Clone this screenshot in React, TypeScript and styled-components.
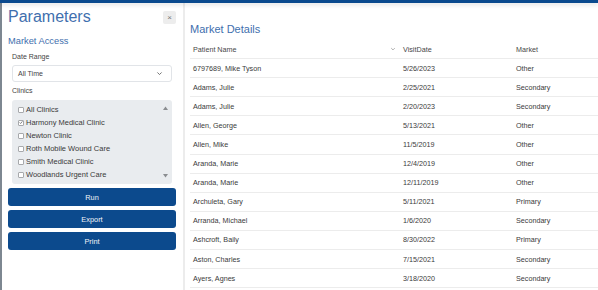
import React from 'react';
import styled, { createGlobalStyle } from 'styled-components';

const GlobalStyle = createGlobalStyle`
  html, body {
    margin: 0;
    padding: 0;
    background: #ffffff;
    font-family: "Liberation Sans", Arial, sans-serif;
  }
  * { box-sizing: border-box; }
`;

const clinics = [
  { name: 'All Clinics', checked: false },
  { name: 'Harmony Medical Clinic', checked: true },
  { name: 'Newton Clinic', checked: false },
  { name: 'Roth Mobile Wound Care', checked: false },
  { name: 'Smith Medical Clinic', checked: false },
  { name: 'Woodlands Urgent Care', checked: false },
];

const rows = [
  ['6797689, Mike Tyson', '5/26/2023', 'Other'],
  ['Adams, Julie', '2/25/2021', 'Secondary'],
  ['Adams, Julie', '2/20/2023', 'Secondary'],
  ['Allen, George', '5/13/2021', 'Other'],
  ['Allen, Mike', '11/5/2019', 'Other'],
  ['Aranda, Marie', '12/4/2019', 'Other'],
  ['Aranda, Marie', '12/11/2019', 'Other'],
  ['Archuleta, Gary', '5/11/2021', 'Primary'],
  ['Arranda, Michael', '1/6/2020', 'Secondary'],
  ['Ashcroft, Baily', '8/30/2022', 'Primary'],
  ['Aston, Charles', '7/15/2021', 'Secondary'],
  ['Ayers, Agnes', '3/18/2020', 'Secondary'],
];

const Page = styled.div`
  width: 598px;
  height: 290px;
  overflow: hidden;
  display: flex;
  flex-direction: column;
`;

const TopBar = styled.div`
  height: 3px;
  background: #0b4a8e;
  box-shadow: 0 2px 4px rgba(0, 0, 0, 0.13);
  position: relative;
  z-index: 2;
`;

const Body = styled.div`
  flex: 1;
  display: flex;
`;

const Rail = styled.div`
  width: 2px;
  background: #7d8791;
`;

const Sidebar = styled.aside`
  width: 183px;
  padding: 0 7px 0 6px;
  border-right: 2px solid #ececec;
`;

const SideHeader = styled.div`
  display: flex;
  justify-content: space-between;
  align-items: flex-start;
  padding-top: 4px;
`;

const Title = styled.h1`
  margin: 0;
  font-size: 16px;
  font-weight: 400;
  line-height: 20px;
  color: #3f6fae;
`;

const CloseButton = styled.button`
  margin-top: 4px;
  width: 13px;
  height: 13px;
  padding: 0;
  border: none;
  border-radius: 2px;
  background: #ededed;
  color: #777;
  font-size: 8px;
  line-height: 13px;
  font-family: inherit;
`;

const SectionTitle = styled.h2`
  margin: 8px 0 0;
  font-size: 9.3px;
  font-weight: 400;
  line-height: 12px;
  color: #3f6fae;
`;

const Group = styled.div`
  padding: 0 4px;
`;

const Label = styled.div<{ $top: number }>`
  margin-top: ${p => p.$top}px;
  font-size: 7px;
  line-height: 9px;
  color: #444;
`;

const Select = styled.div`
  margin-top: 4px;
  height: 17px;
  border: 1px solid #e1e4e8;
  border-radius: 3px;
  background: #fff;
  display: flex;
  align-items: center;
  justify-content: space-between;
  padding: 0 8px 0 5px;
  font-size: 7px;
  color: #444;
`;

const ListBox = styled.div`
  margin-top: 5px;
  height: 84px;
  border-radius: 3px;
  background: #e9ecef;
  display: flex;
  padding: 2px 3px 3px 6px;
`;

const Items = styled.div`
  flex: 1;
  display: flex;
  flex-direction: column;
  padding-top: 1px;
`;

const Item = styled.div`
  height: 13px;
  display: flex;
  align-items: center;
  gap: 2px;
  font-size: 7.5px;
  color: #3a3a3a;
`;

const Box = styled.span<{ $checked: boolean }>`
  width: 6px;
  height: 6px;
  border: 1px solid #a7a9ac;
  border-radius: 1px;
  background: #fff;
  display: flex;
  align-items: center;
  justify-content: center;
`;

const ScrollTrack = styled.div`
  width: 8px;
  display: flex;
  flex-direction: column;
  justify-content: space-between;
  align-items: center;
  padding: 4px 0 3px;
`;

const Buttons = styled.div`
  margin-top: 4px;
  display: flex;
  flex-direction: column;
  gap: 4px;
`;

const ActionButton = styled.button`
  height: 18px;
  border: none;
  border-radius: 3px;
  background: #0c4a8d;
  color: #f1f4f8;
  font-family: inherit;
  font-size: 7.4px;
  padding: 0;
`;

const Main = styled.main`
  flex: 1;
  padding: 0 0 0 5px;
  min-width: 0;
`;

const MainTitle = styled.h2`
  margin: 19px 0 0;
  font-size: 11px;
  font-weight: 400;
  line-height: 14px;
  color: #3f6fae;
`;

const Table = styled.div`
  margin-top: 4px;
`;

const Row = styled.div<{ $header?: boolean }>`
  display: grid;
  grid-template-columns: 210px 113px 1fr;
  height: 19.1px;
  align-items: center;
  border-bottom: 1px solid #ececec;
  font-size: 7.2px;
  color: ${p => (p.$header ? '#474747' : '#3a3a3a')};
`;

const Cell = styled.div`
  padding-left: 3px;
  white-space: nowrap;
`;

const HeadCell = styled(Cell)`
  display: flex;
  justify-content: space-between;
  align-items: center;
  padding-right: 4px;
`;

const Chevron = ({ size = 6, color = '#777' }: { size?: number; color?: string }) => (
  <svg width={size} height={size} viewBox="0 0 10 10">
    <path d="M2 3.5 L5 6.5 L8 3.5" fill="none" stroke={color} strokeWidth="1.3" />
  </svg>
);

const Arrow = ({ up }: { up?: boolean }) => (
  <svg width="5" height="4" viewBox="0 0 10 8">
    <path d={up ? 'M0 8 L5 1 L10 8 Z' : 'M0 0 L5 7 L10 0 Z'} fill="#8a8d90" />
  </svg>
);

const App = () => {
  return (
    <>
      <GlobalStyle />
      <Page>
        <TopBar />
        <Body>
          <Rail />
          <Sidebar>
            <SideHeader>
              <Title>Parameters</Title>
              <CloseButton>×</CloseButton>
            </SideHeader>
            <SectionTitle>Market Access</SectionTitle>
            <Group>
              <Label $top={5}>Date Range</Label>
              <Select>
                <span>All Time</span>
                <Chevron size={7} color="#666" />
              </Select>
              <Label $top={4}>Clinics</Label>
              <ListBox>
                <Items>
                  {clinics.map(c => (
                    <Item key={c.name}>
                      <Box $checked={c.checked}>
                        {c.checked && (
                          <svg width="5" height="5" viewBox="0 0 10 10">
                            <path d="M1.5 5 L4 7.5 L8.5 2" fill="none" stroke="#555" strokeWidth="1.8" />
                          </svg>
                        )}
                      </Box>
                      {c.name}
                    </Item>
                  ))}
                </Items>
                <ScrollTrack>
                  <Arrow up />
                  <Arrow />
                </ScrollTrack>
              </ListBox>
            </Group>
            <Buttons>
              <ActionButton>Run</ActionButton>
              <ActionButton>Export</ActionButton>
              <ActionButton>Print</ActionButton>
            </Buttons>
          </Sidebar>
          <Main>
            <MainTitle>Market Details</MainTitle>
            <Table>
              <Row $header>
                <HeadCell>
                  <span>Patient Name</span>
                  <Chevron size={6} color="#999" />
                </HeadCell>
                <Cell>VisitDate</Cell>
                <Cell>Market</Cell>
              </Row>
              {rows.map((r, i) => (
                <Row key={i}>
                  <Cell>{r[0]}</Cell>
                  <Cell>{r[1]}</Cell>
                  <Cell>{r[2]}</Cell>
                </Row>
              ))}
            </Table>
          </Main>
        </Body>
      </Page>
    </>
  );
};

export default App;
